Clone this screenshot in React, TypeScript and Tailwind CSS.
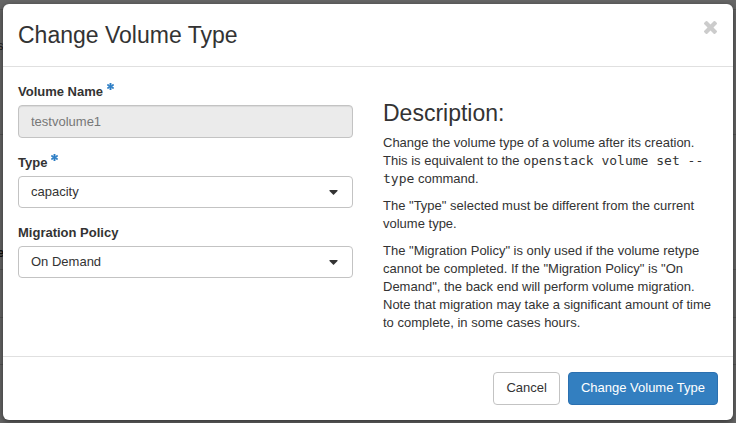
import { useState } from 'react';
import type { ReactNode } from 'react';
import { FaAsterisk } from 'react-icons/fa';

const VOLUME_TYPES = ['capacity', 'performance'];
const MIGRATION_POLICIES = ['Never', 'On Demand'];

function FieldLabel({ htmlFor, required, children }: { htmlFor: string; required?: boolean; children: ReactNode }) {
  return (
    <label htmlFor={htmlFor} className="mb-[3px] flex items-start gap-1 leading-5 font-bold">
      {children}
      {required && (
        <FaAsterisk className="mt-px size-[7px] text-[#2f7fc6]" stroke="currentColor" strokeWidth={50} />
      )}
    </label>
  );
}

type SelectFieldProps = {
  id: string;
  label: string;
  required?: boolean;
  options: string[];
  value: string;
  onChange: (value: string) => void;
};

function SelectField({ id, label, required, options, value, onChange }: SelectFieldProps) {
  return (
    <div>
      <FieldLabel htmlFor={id} required={required}>
        {label}
      </FieldLabel>
      <div className="grid items-center">
        <select
          id={id}
          value={value}
          onChange={(e) => onChange(e.target.value)}
          className="col-start-1 row-start-1 h-8 w-full appearance-none rounded border border-[#c3c3c3] bg-white px-3 pb-px"
        >
          {options.map((option) => (
            <option key={option}>{option}</option>
          ))}
        </select>
        <svg
          viewBox="0 0 9 5"
          className="pointer-events-none col-start-1 row-start-1 mr-[15px] h-[5px] w-[9px] justify-self-end"
          fill="#333"
        >
          <path d="M0.5 0h8v1L4.5 5 0.5 1z" />
        </svg>
      </div>
    </div>
  );
}

// Table page that shows through behind the dialog
function Backdrop() {
  return (
    <div aria-hidden="true" className="absolute inset-0 flex flex-col overflow-hidden bg-[#666]">
      <div className="h-2.5 border-b border-[#555]" />
      <div className="h-[125px] border-b border-[#555] pt-[27px] text-[#222]">
        <span className="-ml-[3px]">s</span>
      </div>
      <div className="h-[135px] border-b border-[#555] pt-[109px] font-bold text-[#111]">
        <span className="-ml-[3px]">e</span>
      </div>
      <div className="h-12 border-b border-[#555]" />
      <div className="h-[47px] border-b border-[#555]" />
    </div>
  );
}

export default function App() {
  const [type, setType] = useState('capacity');
  const [policy, setPolicy] = useState('On Demand');

  return (
    <div className="relative min-h-screen px-[3px] pt-1 pb-[3px] font-['Liberation_Sans',Arial,sans-serif] text-[13px] leading-[18px] text-[#333]">
      <Backdrop />

      <form
        role="dialog"
        aria-labelledby="dialog-title"
        onSubmit={(e) => e.preventDefault()}
        className="relative rounded-md bg-white shadow-[0_2px_6px_rgba(0,0,0,0.5)]"
      >
        {/* Header */}
        <header className="flex items-start justify-between border-b border-[#e0e0e0] p-[15px]">
          <h1 id="dialog-title" className="text-[23px] leading-8">
            Change Volume Type
          </h1>
          <button type="button" aria-label="Close" className="mt-0.5 mr-px text-[#ccc] hover:text-[#999]">
            <svg viewBox="110 366 1188 1188" className="size-[13px]" fill="currentColor">
              <path d="M1298 1322q0 40-28 68l-136 136q-28 28-68 28t-68-28l-294-294-294 294q-28 28-68 28t-68-28l-136-136q-28-28-28-68t28-68l294-294-294-294q-28-28-28-68t28-68l136-136q28-28 68-28t68 28l294 294 294-294q28-28 68-28t68 28l136 136q28 28 28 68t-28 68l-294 294 294 294q28 28 28 68z" />
            </svg>
          </button>
        </header>

        {/* Body */}
        <div className="grid grid-cols-2 gap-[30px] p-[15px]">
          <div className="flex flex-col gap-[15px]">
            <div>
              <FieldLabel htmlFor="name" required>
                Volume Name
              </FieldLabel>
              <input
                id="name"
                type="text"
                value="testvolume1"
                readOnly
                className="block h-[33px] w-full rounded border border-[#c3c3c3] bg-[#ebebeb] px-3 text-[#777] shadow-[inset_0_1px_1px_rgba(0,0,0,0.075)]"
              />
            </div>
            <SelectField id="type" label="Type" required options={VOLUME_TYPES} value={type} onChange={setType} />
            <SelectField
              id="policy"
              label="Migration Policy"
              options={MIGRATION_POLICIES}
              value={policy}
              onChange={setPolicy}
            />
          </div>

          <div className="pt-[19px]">
            <h2 className="mb-2 text-[23px] leading-[25px]">Description:</h2>
            <p className="mb-[9px]">
              Change the volume type of a volume after its creation. This is equivalent to the{' '}
              <code className="font-['DejaVu_Sans_Mono',monospace] text-[13px]">openstack volume set --type</code>{' '}
              command.
            </p>
            <p className="mb-[9px]">The "Type" selected must be different from the current volume type.</p>
            <p className="mb-[9px]">
              The "Migration Policy" is only used if the volume retype cannot be completed. If the "Migration Policy"
              is "On Demand", the back end will perform volume migration. Note that migration may take a significant
              amount of time to complete, in some cases hours.
            </p>
          </div>
        </div>

        {/* Footer */}
        <footer className="flex justify-end gap-2 border-t border-[#e0e0e0] p-[15px]">
          <button
            type="button"
            className="h-[33px] rounded border border-[#c3c3c3] bg-white px-3 pb-0.5 hover:bg-[#eee]"
          >
            Cancel
          </button>
          <button
            type="submit"
            className="h-[33px] rounded border border-[#2b70b0] bg-[#337fc0] px-3 pb-0.5 text-white hover:bg-[#2b70b0]"
          >
            Change Volume Type
          </button>
        </footer>
      </form>
    </div>
  );
}
